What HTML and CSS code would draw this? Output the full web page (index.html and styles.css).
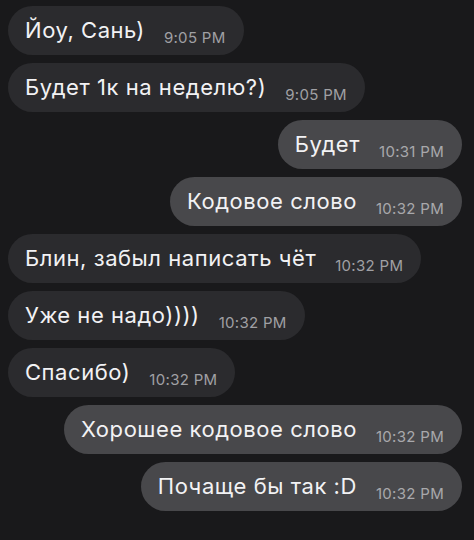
FILE: index.html
```html
<!DOCTYPE html>
<html lang="ru">

<head>
    <meta charset="UTF-8">
    <meta name="viewport" content="width=device-width, initial-scale=1.0">
    <title>Чат</title>
    <link rel="stylesheet" href="styles.css">
</head>

<body>
    <div id="chat">
        <div class="msg in"><span class="text">Йоу, Сань)</span><span class="time">9:05 PM</span></div>
        <div class="msg in"><span class="text">Будет 1к на неделю?)</span><span class="time">9:05 PM</span></div>
        <div class="msg out"><span class="text">Будет</span><span class="time">10:31 PM</span></div>
        <div class="msg out"><span class="text">Кодовое слово</span><span class="time">10:32 PM</span></div>
        <div class="msg in"><span class="text">Блин, забыл написать чёт</span><span class="time">10:32 PM</span></div>
        <div class="msg in"><span class="text">Уже не надо))))</span><span class="time">10:32 PM</span></div>
        <div class="msg in"><span class="text">Спасибо)</span><span class="time">10:32 PM</span></div>
        <div class="msg out"><span class="text">Хорошее кодовое слово</span><span class="time">10:32 PM</span></div>
        <div class="msg out"><span class="text">Почаще бы так :D</span><span class="time">10:32 PM</span></div>
    </div>
</body>

</html>
```

FILE: styles.css
```css
body {
    font-family: Inter, 'Liberation Sans', sans-serif;
    margin: 0;
    overflow: hidden;
    background: #19191b;
    height: 540px;
}

#chat {
    display: flex;
    flex-direction: column;
    gap: 8px;
    padding: 6px 12px 0 8px;
}

.msg {
    display: flex;
    align-items: baseline;
    gap: 19px;
    box-sizing: border-box;
    height: 49px;
    padding: 11px 18px 0 17px;
    border-radius: 25px;
    line-height: 27px;
}

.msg.in {
    align-self: flex-start;
    background-color: #2b2b2e;
}

.msg.out {
    align-self: flex-end;
    background-color: #48484b;
}

.text {
    font-size: 22px;
    letter-spacing: 0.55px;
    color: #f2f2f4;
}

.time {
    position: relative;
    top: 5px;
    font-size: 15px;
    letter-spacing: 0.3px;
    color: #a0a0a4;
}

.msg.out .time {
    color: #a8a8ac;
}
```
